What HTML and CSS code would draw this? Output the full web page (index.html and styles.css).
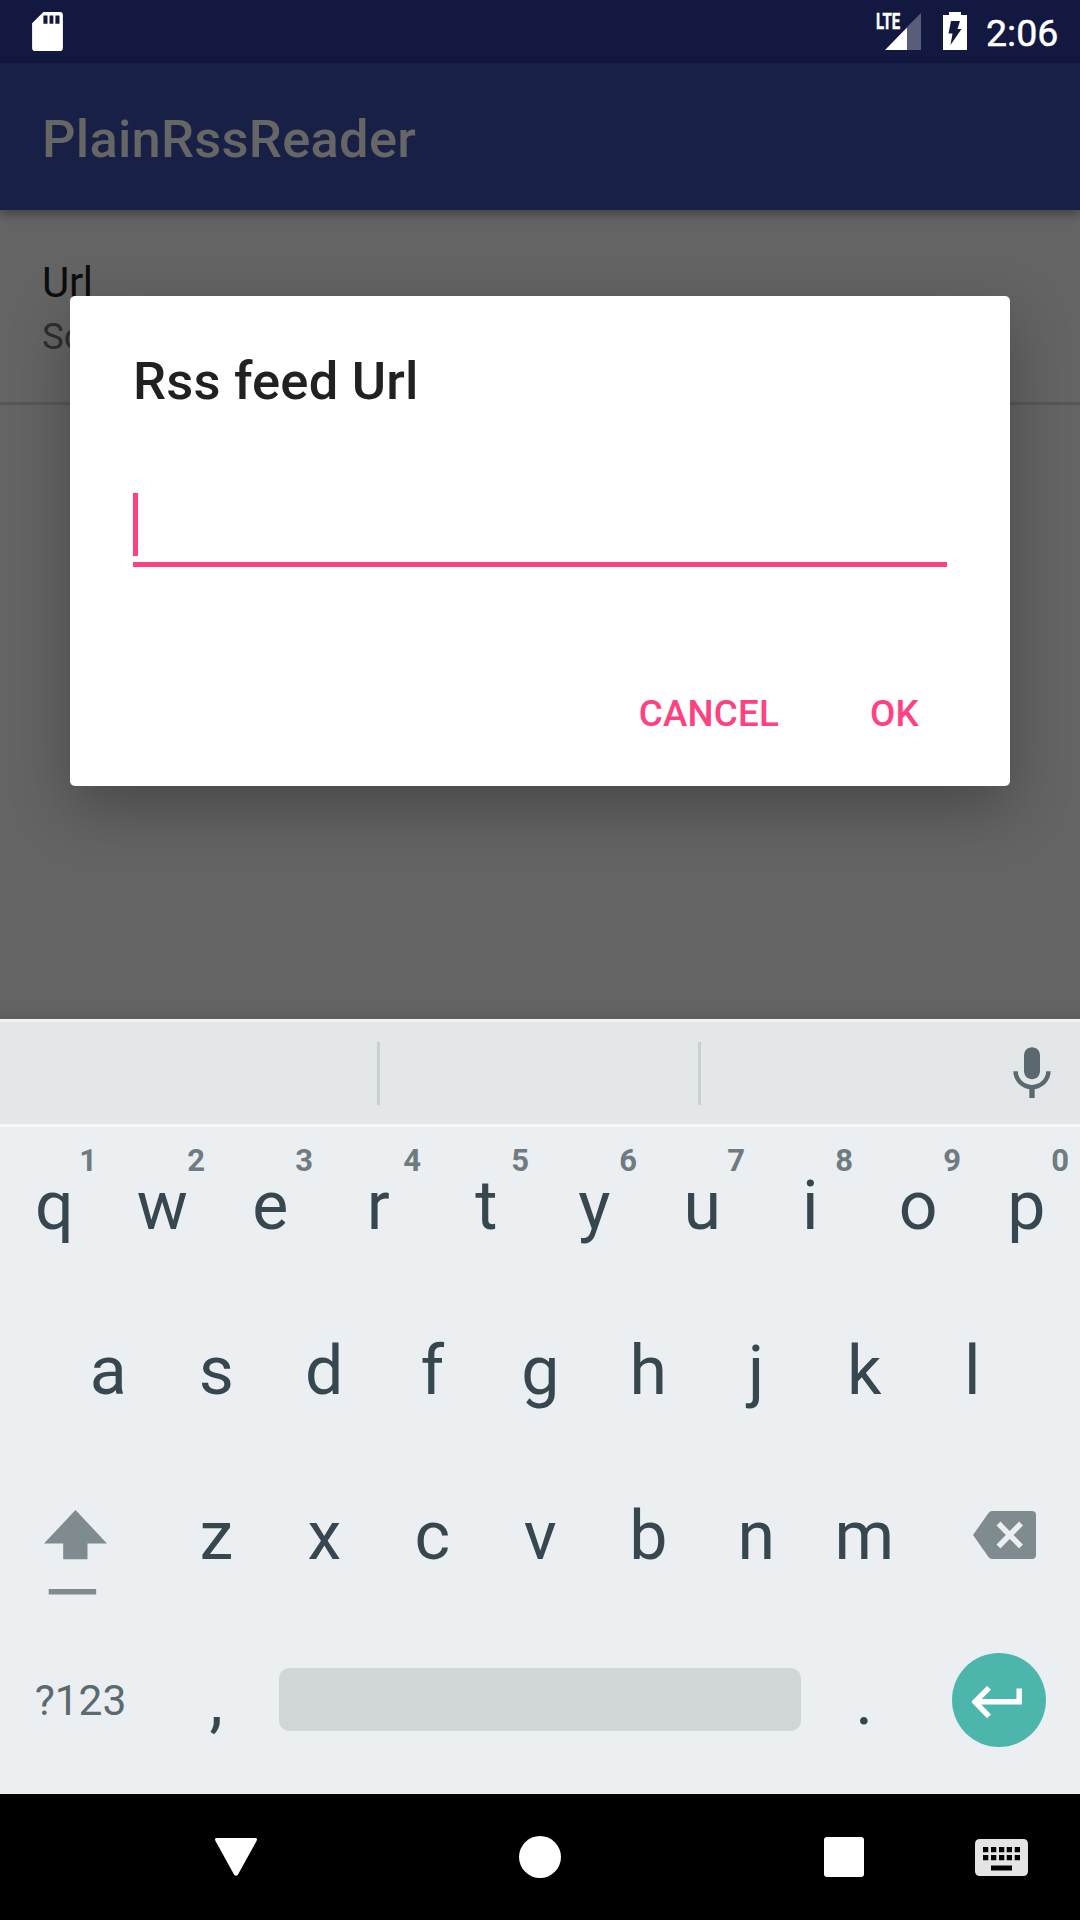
FILE: index.html
```html
<!DOCTYPE html>
<html lang="en">
<head>
<meta charset="utf-8">
<title>PlainRssReader</title>
<link rel="stylesheet" href="styles.css">
</head>
<body>
<div class="screen">
  <div class="window">
    <header class="status-bar">
      <svg class="status-sd" viewBox="0 0 30 38"><path fill-rule="evenodd" d="M11 0h16q3 0 3 3v32q0 3-3 3H3q-3 0-3-3V11ZM11 3.500v8h4v-8ZM17 3.500v8h3.700v-8ZM22.700 3.500v8h4v-8Z"/></svg>
      <div class="status-right">
        <div class="signal">
          <svg class="signal-icon" viewBox="0 0 36 37"><path opacity=".3" d="M36 0v37H22V14Z"/><path d="M22 14.500v22.500H0Z"/></svg>
          <span class="signal-label">LTE</span>
        </div>
        <svg class="battery" viewBox="0 0 24 38"><path fill-rule="evenodd" d="M6 0h12v3h6v35H0V3h6ZM8 9h9l-2.500 8h4L7.500 33l2-11.500h-4Z"/></svg>
        <span class="clock">2:06</span>
      </div>
    </header>
    <div class="app-bar"><h1 class="app-title">PlainRssReader</h1></div>
    <main class="content">
      <div class="pref">
        <div class="pref-title">Url</div>
        <div class="pref-summary">Source</div>
      </div>
    </main>
    <section class="dialog">
      <h2 class="dialog-title">Rss feed Url</h2>
      <div class="field"><span class="caret"></span></div>
      <div class="actions"><span class="action">CANCEL</span><span class="action">OK</span></div>
    </section>
  </div>

  <section class="keyboard">
    <div class="suggestions">
      <span class="slot slot-first"></span>
      <span class="slot slot-mid"></span>
      <svg class="mic" viewBox="0 0 24 24"><path d="M12 14c1.660 0 3-1.340 3-3V5c0-1.660-1.340-3-3-3S9 3.340 9 5v6c0 1.660 1.340 3 3 3z"/><path d="M17.300 11c0 3-2.540 5.100-5.300 5.100S6.700 14 6.700 11H5c0 3.410 2.720 6.230 6 6.720V21h2v-3.280c3.280-.480 6-3.300 6-6.720h-1.700z"/></svg>
    </div>
    <div class="keys">
      <div class="row">
        <span class="key">q<span class="hint">1</span></span><span class="key">w<span class="hint">2</span></span><span class="key">e<span class="hint">3</span></span><span class="key">r<span class="hint">4</span></span><span class="key">t<span class="hint">5</span></span><span class="key">y<span class="hint">6</span></span><span class="key">u<span class="hint">7</span></span><span class="key">i<span class="hint">8</span></span><span class="key">o<span class="hint">9</span></span><span class="key">p<span class="hint">0</span></span>
      </div>
      <div class="row">
        <span class="key">a</span><span class="key">s</span><span class="key">d</span><span class="key">f</span><span class="key">g</span><span class="key">h</span><span class="key">j</span><span class="key">k</span><span class="key">l</span>
      </div>
      <div class="row">
        <span class="key wide shift"><svg class="shift-icon" viewBox="0 0 63 86"><path d="M31.500 0 63 33.500H43.500V49.300H19.200V33.500H0ZM4.700 79h47.500v5.600H4.700Z"/></svg></span>
        <span class="key">z</span><span class="key">x</span><span class="key">c</span><span class="key">v</span><span class="key">b</span><span class="key">n</span><span class="key">m</span>
        <span class="key wide delete"><svg class="delete-icon" viewBox="0 0 63 48"><path class="delete-shape" d="M19 0H59q4 0 4 4V44q0 4-4 4H19q-2 0-3.500-2L0 24 15.500 2Q17 0 19 0Z"/><path class="delete-cross" d="M25.500 12.500 48 35.500M48 12.500 25.500 35.500"/></svg></span>
      </div>
      <div class="row">
        <span class="key wide symbols">?123</span>
        <span class="key">,</span>
        <span class="key space"><span class="space-bar"></span></span>
        <span class="key">.</span>
        <span class="key wide enter-key"><span class="enter"><svg class="enter-icon" viewBox="0 0 50 33"><path d="M47.200 2.500V15.800H4M17 1.800 3 15.800 17 30.300"/></svg></span></span>
      </div>
    </div>
  </section>

  <nav class="nav-bar">
    <svg class="nav-icon nav-back" viewBox="0 0 42 42"><path d="M2 2H40Q43 2 41.500 5L23 38.500Q21 41 19 38.500L.5 5Q-1 2 2 2Z"/></svg>
    <svg class="nav-icon nav-home" viewBox="0 0 42 42"><circle cx="21" cy="21" r="21"/></svg>
    <svg class="nav-icon nav-recent" viewBox="0 0 42 42"><rect x="1" y="1" width="40" height="40" rx="3"/></svg>
    <svg class="nav-ime" viewBox="0 0 53 37"><path fill-rule="evenodd" d="M5 0H48q5 0 5 5V32q0 5-5 5H5q-5 0-5-5V5Q0 0 5 0ZM8 8v5.300h5.300V8ZM16 8v5.300h5.300V8ZM24 8v5.300h5.300V8ZM31.700 8v5.300H37V8ZM39.700 8v5.300H45V8ZM8 16v5.300h5.300V16ZM16 16v5.300h5.300V16ZM24 16v5.300h5.300V16ZM31.700 16v5.300H37V16ZM39.700 16v5.300H45V16ZM16 26.500v5h21V26.500Z"/></svg>
  </nav>
</div>
</body>
</html>
```
FILE: styles.css
```css
* { box-sizing: border-box; }
body { margin: 0; font-family: Roboto, "Liberation Sans", sans-serif; }
svg { display: block; flex: none; }
h1, h2 { margin: 0; font-weight: 500; }

.screen { width: 1080px; height: 1920px; display: flex; flex-direction: column; overflow: hidden; }
.window { position: relative; height: 1019px; flex: none; display: flex; flex-direction: column; background: #646464; overflow: hidden; }

.status-bar { height: 63px; flex: none; display: flex; justify-content: space-between; padding: 12px 20px 0 32px; background: #131840; fill: #fff; color: #fff; }
.status-sd { width: 31px; height: 39px; }
.status-right { display: flex; }
.signal { position: relative; width: 46px; height: 38px; display: flex; justify-content: flex-end; margin-right: 22px; }
.signal-icon { width: 36px; height: 37px; margin-top: 1px; }
.signal-label { position: absolute; left: 1px; top: 1px; font-size: 22px; line-height: 17px; font-weight: 700; -webkit-text-stroke: .4px #fff; transform: scaleX(.68); transform-origin: left; }
.battery { width: 24px; height: 38px; margin-right: 19px; }
.clock { width: 74px; font-size: 37.500px; line-height: 42px; font-weight: 400; -webkit-text-stroke: .5px #fff; }

.app-bar { height: 147px; flex: none; display: flex; align-items: center; padding: 5px 42px 0; background: #192046; box-shadow: 0 4px 10px rgba(0,0,0,.35); z-index: 1; }
.app-title { font-size: 52.500px; line-height: 62px; letter-spacing: .25px; color: #666; }

.content { flex: 1; background: linear-gradient(to top, #5c5c5c, #646464 14px); }
.pref { height: 195px; padding: 48px 42px 0; border-bottom: 3px solid #575757; }
.pref-title { font-size: 42px; line-height: 50px; letter-spacing: -.3px; color: #0d0d0d; }
.pref-summary { font-size: 36.750px; line-height: 44px; margin-top: 7px; color: #2e2e2e; }

.dialog { position: absolute; z-index: 2; left: 70px; top: 296px; width: 940px; height: 490px; padding: 54px 63px 0; border-radius: 5px; background: #fff; box-shadow: 0 22px 60px rgba(0,0,0,.28); }
.dialog-title { font-size: 52.500px; line-height: 62px; letter-spacing: .2px; color: #212121; }
.field { height: 74px; margin-top: 81px; border-bottom: 5px solid #ff4081; }
.caret { display: block; width: 5px; height: 63px; background: #ff4081; }
.actions { display: flex; justify-content: flex-end; gap: 91px; padding: 125px 28px 0 0; color: #ff4081; }
.action { font-size: 36.750px; line-height: 44px; font-weight: 500; letter-spacing: .2px; }

.keyboard { height: 775px; flex: none; background: #ebeff2; }
.suggestions { height: 108px; display: flex; align-items: center; border-top: 3px solid #f1f2f2; border-bottom: 3px solid #f6f8f9; background: #e3e7ea; }
.slot { height: 63px; border-right: 3px solid #cacfd2; }
.slot-first { width: 380px; }
.slot-mid { width: 321px; }
.mic { width: 64px; height: 64px; margin: 2px 0 0 299px; fill: #5b686e; }

.keys { display: flex; flex-direction: column; gap: 7px; color: #37474f; }
.row { height: 158px; display: flex; justify-content: center; }
.key { position: relative; width: 108px; height: 158px; flex: none; display: flex; align-items: center; justify-content: center; padding-left: .5px; font-size: 68px; line-height: 80px; }
.wide { width: 162px; }
.hint { position: absolute; right: 11px; top: 16px; font-size: 31px; line-height: 36px; font-weight: 700; color: #6f7b81; }
.shift { align-items: flex-start; justify-content: flex-start; padding: 53px 0 0 44px; }
.shift-icon { width: 63px; height: 86px; fill: #808b8f; }
.delete { padding-left: 11px; }
.delete-icon { width: 63px; height: 48px; margin-bottom: 2px; }
.delete-shape { fill: #808b8f; }
.delete-cross { stroke: #ebeff2; stroke-width: 5.500; }
.symbols { font-size: 42.500px; padding: 0 1px 1px 0; color: #5b6a70; }
.space { width: 540px; padding: 0; }
.space-bar { width: 522px; height: 63px; margin-bottom: 3px; border-radius: 10px; background: #d1d6d9; }
.enter-key { padding: 0; }
.enter { width: 94px; height: 94px; margin-bottom: 2px; border-radius: 50%; display: flex; align-items: center; justify-content: center; background: #4db6ac; }
.enter-icon { width: 50px; height: 33px; margin: 4px 4px 0 0; fill: none; stroke: #fff; stroke-width: 5.500; }

.nav-bar { height: 126px; flex: none; display: flex; align-items: center; background: #000; fill: #fff; padding-left: 215px; }
.nav-icon { width: 42px; height: 42px; }
.nav-home { margin-left: 262px; }
.nav-recent { margin-left: 262px; }
.nav-ime { width: 53px; height: 37px; margin-left: 110px; fill: #e4e4e4; }
```
